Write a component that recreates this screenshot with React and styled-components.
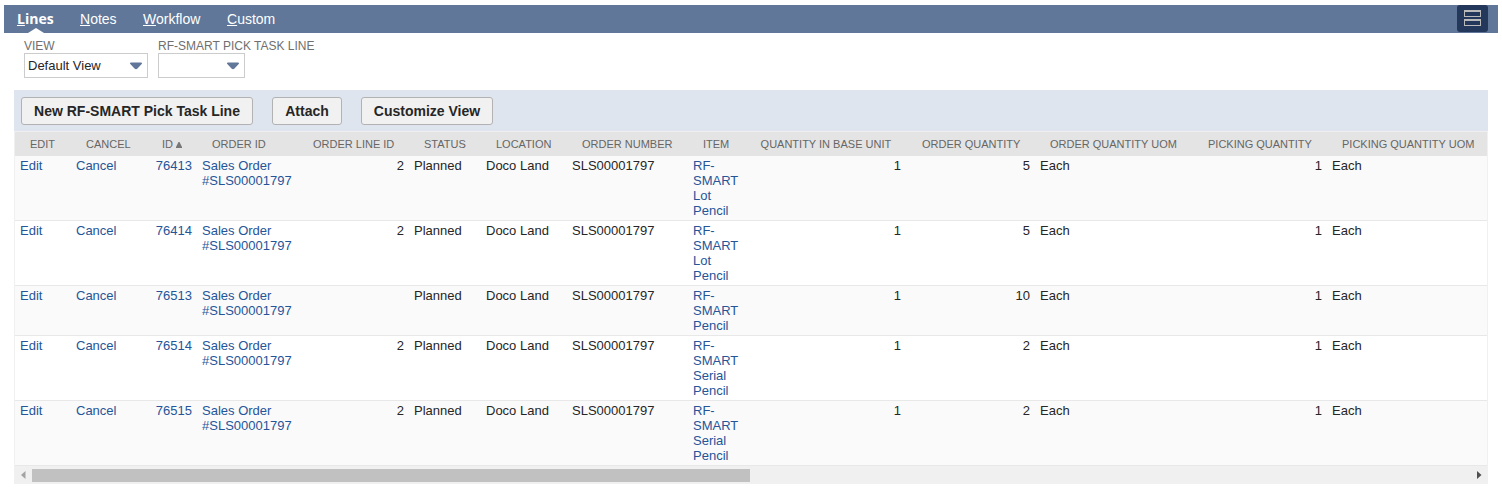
import React from "react";
import styled, { createGlobalStyle } from "styled-components";

const GlobalStyle = createGlobalStyle`
  * { box-sizing: border-box; }
  body {
    margin: 0;
    background: #fff;
    color: #262626;
    font-family: "Liberation Sans", Arial, sans-serif;
    font-size: 13px;
  }
`;

const Page = styled.main`
  width: 1502px;
  height: 491px;
  padding: 5px 4px 0;
  overflow: hidden;
`;

const TabBar = styled.nav`
  display: flex;
  justify-content: space-between;
  height: 28px;
  padding: 0 10px 0 13px;
  background: #607799;
`;

const Tabs = styled.div`
  display: flex;
  gap: 26px;
`;

const Tab = styled.a`
  position: relative;
  color: #fff;
  font-size: 14px;
  line-height: 28px;
  font-weight: ${(p) => (p.$active ? 700 : 400)};
  font-family: ${(p) => (p.$active ? '"Open Sans", sans-serif' : "inherit")};
  width: ${(p) => p.$width}px;
  white-space: nowrap;

  &::after {
    content: "";
    display: ${(p) => (p.$active ? "block" : "none")};
    position: absolute;
    left: 11px;
    bottom: 0;
    border: 8px solid transparent;
    border-top: 0;
    border-bottom: 5px solid #fff;
  }
`;

const LayoutToggle = styled.button`
  display: flex;
  flex-direction: column;
  align-items: center;
  gap: 2px;
  width: 31px;
  height: 27px;
  padding: 5px 0 0;
  border: 0;
  border-radius: 3px;
  background: #24385b;
`;

const ToggleBar = styled.span`
  flex: none;
  width: 17px;
  height: 7px;
  border: 1px solid #bababa;
  border-top-width: 2px;
`;

const Filters = styled.div`
  display: flex;
  gap: 10px;
  padding: 5px 20px 12px;
`;

const Field = styled.label`
  width: ${(p) => p.$width}px;
  white-space: nowrap;
`;

const FieldLabel = styled.span`
  display: block;
  height: 15px;
  padding-top: 1px;
  color: #6f6f6f;
  font-size: 12px;
  line-height: 15px;
`;

const SelectBox = styled.div`
  display: flex;
  align-items: center;
  justify-content: space-between;
  height: 25px;
  padding: 0 5px 0 3px;
  border: 1px solid #ccc;
  line-height: 23px;
`;

const Panel = styled.section`
  margin: 0 10px;
`;

const Toolbar = styled.div`
  display: flex;
  gap: 19px;
  height: 41px;
  padding: 7px;
  background: #dfe5ef;
`;

const Button = styled.button`
  width: ${(p) => p.$width}px;
  height: 28px;
  padding: 0;
  border: 1px solid #b2b2b2;
  border-radius: 3px;
  background: #f1f1f1;
  color: #262626;
  font: 700 14px "Liberation Sans", Arial, sans-serif;
  white-space: nowrap;
`;

const Grid = styled.div`
  border: 1px solid #f0f0f0;
  border-bottom: 0;
`;

const Table = styled.table`
  width: 1472px;
  table-layout: fixed;
  border-collapse: separate;
  border-spacing: 0;
`;

const Column = styled.col`
  width: ${(p) => p.$width}px;
`;

const HeadCell = styled.th`
  height: 24px;
  padding: 0 0 0 ${(p) => p.$indent || 15}px;
  background: #e4e4e4;
  color: #666;
  font-size: 11px;
  font-weight: 400;
  text-align: left;
  white-space: nowrap;
`;

const SortMark = styled.svg`
  margin-left: 3px;
`;

const Row = styled.tr`
  background: #fff;
  &:nth-child(odd) { background: #fafafa; }
`;

const Cell = styled.td`
  padding: 2px 5px;
  border-bottom: 1px solid #e8e8e8;
  color: ${(p) => (p.$link ? "#255599" : "#262626")};
  line-height: 15px;
  text-align: ${(p) => (p.$right ? "right" : "left")};
  vertical-align: top;
`;

const ScrollTrack = styled.div`
  display: flex;
  align-items: center;
  height: 18px;
  padding: 0 5px 0 6px;
  background: #f0f0f0;
`;

const ScrollThumb = styled.div`
  width: 718px;
  height: 13px;
  margin: 0 auto 0 6px;
  background: #c1c1c1;
`;

const Arrow = () => (
  <svg width="12" height="8" viewBox="0 0 12 8">
    <path d="M1 .5h10q1.2 0 .9 1.2L7.5 6.5Q6 8 4.5 6.5L.1 1.7Q-.2.5 1 .5z" fill="#607799" />
  </svg>
);

const tabs = [
  { text: "Lines", width: 37, active: true },
  { text: "Notes", width: 37 },
  { text: "Workflow", width: 58 },
  { text: "Custom", width: 49 },
];

const columns = [
  { key: "edit", title: "EDIT", width: 56, link: true },
  { key: "cancel", title: "CANCEL", width: 76, link: true },
  { key: "id", title: "ID", width: 50, link: true, right: true, sorted: true },
  { key: "order", title: "ORDER ID", width: 101, link: true },
  { key: "line", title: "ORDER LINE ID", width: 111, right: true },
  { key: "status", title: "STATUS", width: 72 },
  { key: "location", title: "LOCATION", width: 86 },
  { key: "number", title: "ORDER NUMBER", width: 121 },
  { key: "item", title: "ITEM", width: 57, link: true },
  { key: "base", title: "QUANTITY IN BASE UNIT", width: 161, right: true, indent: 15.6 },
  { key: "qty", title: "ORDER QUANTITY", width: 129, right: true, indent: 16 },
  { key: "uom", title: "ORDER QUANTITY UOM", width: 158 },
  { key: "pick", title: "PICKING QUANTITY", width: 134, right: true },
  { key: "pickUom", title: "PICKING QUANTITY UOM", width: 160 },
];

const line = (id, lineId, item, qty) => ({
  edit: "Edit",
  cancel: "Cancel",
  id,
  order: "Sales Order #SLS00001797",
  line: lineId,
  status: "Planned",
  location: "Doco Land",
  number: "SLS00001797",
  item,
  base: "1",
  qty,
  uom: "Each",
  pick: "1",
  pickUom: "Each",
});

const rows = [
  line("76413", "2", "RF-SMART Lot Pencil", "5"),
  line("76414", "2", "RF-SMART Lot Pencil", "5"),
  line("76513", "", "RF-SMART Pencil", "10"),
  line("76514", "2", "RF-SMART Serial Pencil", "2"),
  line("76515", "2", "RF-SMART Serial Pencil", "2"),
];

export default function App() {
  return (
    <Page>
      <GlobalStyle />
      <TabBar>
        <Tabs>
          {tabs.map((t) => (
            <Tab key={t.text} $active={t.active} $width={t.width}>
              <u>{t.text[0]}</u>
              {t.text.slice(1)}
            </Tab>
          ))}
        </Tabs>
        <LayoutToggle aria-label="Toggle layout">
          <ToggleBar />
          <ToggleBar />
        </LayoutToggle>
      </TabBar>
      <Filters>
        <Field $width={124}>
          <FieldLabel>VIEW</FieldLabel>
          <SelectBox>
            Default View
            <Arrow />
          </SelectBox>
        </Field>
        <Field $width={87}>
          <FieldLabel>RF-SMART PICK TASK LINE</FieldLabel>
          <SelectBox>
            <span />
            <Arrow />
          </SelectBox>
        </Field>
      </Filters>
      <Panel>
        <Toolbar>
          <Button $width={232}>New RF-SMART Pick Task Line</Button>
          <Button $width={70}>Attach</Button>
          <Button $width={132}>Customize View</Button>
        </Toolbar>
        <Grid>
          <Table>
            <colgroup>
              {columns.map((c) => (
                <Column key={c.key} $width={c.width} />
              ))}
            </colgroup>
            <thead>
              <tr>
                {columns.map((c) => (
                  <HeadCell key={c.key} $indent={c.indent}>
                    {c.title}
                    {c.sorted && (
                      <SortMark width="6" height="6" viewBox="0 0 6 6">
                        <path d="M2.5 0h1L6 5v1H0V5z" fill="#777" />
                      </SortMark>
                    )}
                  </HeadCell>
                ))}
              </tr>
            </thead>
            <tbody>
              {rows.map((r) => (
                <Row key={r.id}>
                  {columns.map((c) => (
                    <Cell key={c.key} $link={c.link} $right={c.right}>
                      {r[c.key]}
                    </Cell>
                  ))}
                </Row>
              ))}
            </tbody>
          </Table>
          <ScrollTrack>
            <svg width="5" height="8" viewBox="0 0 5 8">
              <path d="M4.5 0v8L0 4z" fill="#a3a3a3" />
            </svg>
            <ScrollThumb />
            <svg width="5" height="8" viewBox="0 0 5 8">
              <path d="M0 0v8l4.5-4z" fill="#505050" />
            </svg>
          </ScrollTrack>
        </Grid>
      </Panel>
    </Page>
  );
}
